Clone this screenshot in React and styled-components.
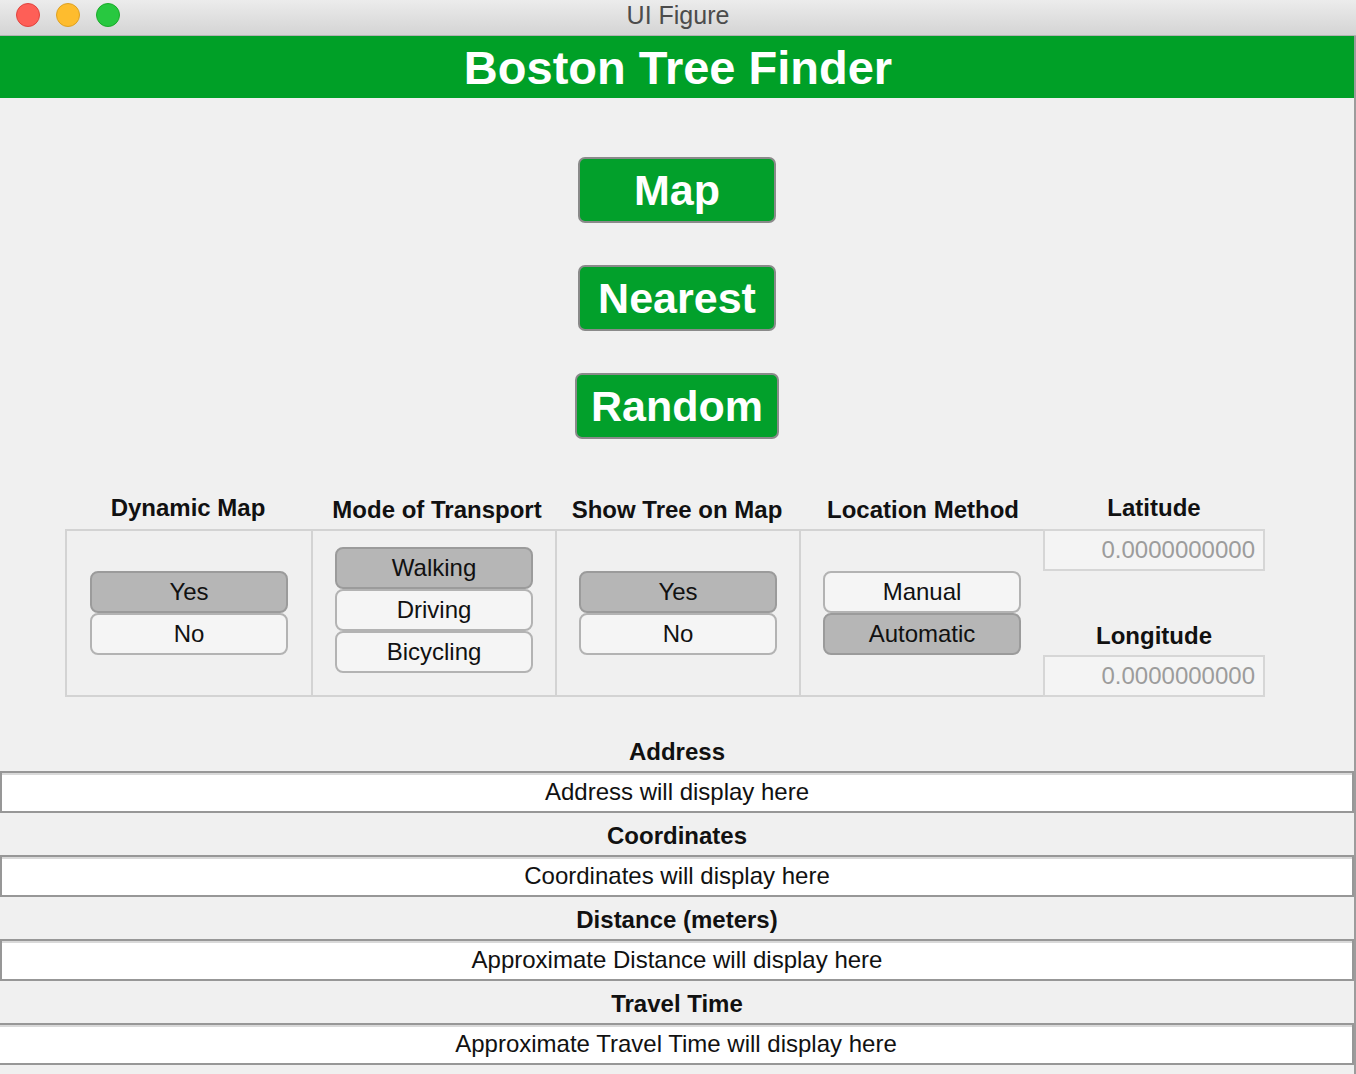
import React from 'react'
import styled, { createGlobalStyle } from 'styled-components'

const GlobalStyle = createGlobalStyle`
  html, body {
    margin: 0;
    padding: 0;
    background: #f0f0f0;
  }
  body {
    font-family: "Liberation Sans", Arial, Helvetica, sans-serif;
  }
`

const Window = styled.div`
  width: 1356px;
  height: 1074px;
  display: flex;
  flex-direction: column;
  overflow: hidden;
  background: #f0f0f0;
`

const TitleBar = styled.div`
  height: 35px;
  flex: none;
  display: flex;
  align-items: center;
  position: relative;
  background: linear-gradient(#ececec, #d4d4d4);
  border-bottom: 1px solid #b2b2b2;
`

const Lights = styled.div`
  display: flex;
  gap: 16px;
  padding-left: 16px;
  padding-bottom: 5px;
`

const Light = styled.span`
  width: 22px;
  height: 22px;
  border-radius: 50%;
  background: ${p => p.fill};
  border: 1px solid ${p => p.edge};
`

const WindowTitle = styled.div`
  position: absolute;
  left: 0;
  right: 0;
  top: 0;
  text-align: center;
  font-size: 25px;
  line-height: 30px;
  color: #4c4c4c;
  pointer-events: none;
`

const Body = styled.div`
  flex: 1;
  display: flex;
  flex-direction: column;
  border-right: 2px solid #9c9c9c;
`

const Header = styled.div`
  height: 62px;
  flex: none;
  background: #00a027;
  color: #fff;
  font-weight: 700;
  font-size: 47px;
  display: flex;
  align-items: center;
  justify-content: center;
  padding-left: 2px;
`

const Actions = styled.div`
  display: flex;
  flex-direction: column;
  align-items: center;
  gap: 42px;
  padding-top: 59px;
`

const ActionButton = styled.button`
  width: ${p => p.w}px;
  height: 66px;
  box-sizing: border-box;
  background: #02a02b;
  color: #fff;
  font-family: inherit;
  font-weight: 700;
  font-size: 43px;
  border: 2px solid #8a8a8a;
  border-radius: 7px;
  padding: 0;
  cursor: pointer;
`

const Controls = styled.div`
  display: flex;
  margin: 54px 0 0 65px;
`

const Column = styled.div`
  width: ${p => p.w}px;
  display: flex;
  flex-direction: column;
`

const Heading = styled.div`
  height: 36px;
  box-sizing: border-box;
  display: flex;
  align-items: center;
  justify-content: center;
  font-weight: 700;
  font-size: 24px;
  color: #111;
  white-space: nowrap;
  padding-bottom: ${p => p.low ? 2 : 6}px;
  padding-left: ${p => p.nudge || 0}px;
`

const Cell = styled.div`
  height: 168px;
  box-sizing: border-box;
  border: 2px solid #d3d3d3;
  border-right: none;
  display: flex;
  align-items: center;
  justify-content: center;
`

const Toggle = styled.div`
  width: 198px;
  display: flex;
  flex-direction: column;
  margin-top: ${p => p.shift || 0}px;
`

const ToggleButton = styled.div`
  height: 42px;
  box-sizing: border-box;
  border: 2px solid ${p => p.on ? '#9b9b9b' : '#b3b3b3'};
  border-radius: 8px;
  background: ${p => p.on ? '#b6b6b6' : '#f5f5f5'};
  display: flex;
  align-items: center;
  justify-content: center;
  font-size: 24px;
  color: #111;
`

const CoordColumn = styled.div`
  width: 222px;
  display: flex;
  flex-direction: column;
`

const CoordField = styled.div`
  height: 42px;
  box-sizing: border-box;
  border: 2px solid #d6d6d6;
  background: #f4f4f4;
  display: flex;
  align-items: center;
  justify-content: flex-end;
  padding-right: 8px;
  font-size: 24px;
  color: #9c9c9c;
`

const CoordGap = styled.div`
  height: 84px;
  display: flex;
  align-items: flex-end;
  justify-content: center;
  padding-bottom: 5px;
  box-sizing: border-box;
  font-weight: 700;
  font-size: 24px;
  color: #111;
`

const Outputs = styled.div`
  display: flex;
  flex-direction: column;
  margin-top: 32px;
`

const OutLabel = styled.div`
  height: 42px;
  box-sizing: border-box;
  padding-top: 4px;
  display: flex;
  align-items: center;
  justify-content: center;
  font-weight: 700;
  font-size: 24px;
  color: #111;
`

const OutField = styled.div`
  height: 42px;
  box-sizing: border-box;
  background: #fff;
  border: 2px solid #979797;
  border-left: ${p => p.open ? 'none' : '2px solid #979797'};
  box-shadow: inset 0 2px 0 #d9d9d9;
  display: flex;
  align-items: center;
  justify-content: center;
  font-size: 24px;
  color: #111;
`

const groups = [
  { title: 'Dynamic Map', w: 246, items: ['Yes', 'No'], on: 0 },
  { title: 'Mode of Transport', w: 244, items: ['Walking', 'Driving', 'Bicycling'], on: 0, shift: -6, low: true, nudge: 8 },
  { title: 'Show Tree on Map', w: 244, items: ['Yes', 'No'], on: 0, low: true },
  { title: 'Location Method', w: 244, items: ['Manual', 'Automatic'], on: 1, low: true, nudge: 4 },
]

const outputs = [
  ['Address', 'Address will display here'],
  ['Coordinates', 'Coordinates will display here'],
  ['Distance (meters)', 'Approximate Distance will display here'],
  ['Travel Time', 'Approximate Travel Time will display here'],
]

const App = () => {
  return (
    <Window>
      <GlobalStyle />
      <TitleBar>
        <Lights>
          <Light fill="#fe5f57" edge="#e0443e" />
          <Light fill="#febc2e" edge="#dea123" />
          <Light fill="#28c840" edge="#1aab29" />
        </Lights>
        <WindowTitle>UI Figure</WindowTitle>
      </TitleBar>
      <Body>
        <Header>Boston Tree Finder</Header>
        <Actions>
          <ActionButton w={198}>Map</ActionButton>
          <ActionButton w={198}>Nearest</ActionButton>
          <ActionButton w={204}>Random</ActionButton>
        </Actions>
        <Controls>
          {groups.map(g => (
            <Column key={g.title} w={g.w}>
              <Heading low={g.low} nudge={g.nudge}>{g.title}</Heading>
              <Cell>
                <Toggle shift={g.shift}>
                  {g.items.map((it, j) => (
                    <ToggleButton key={it} on={j === g.on}>{it}</ToggleButton>
                  ))}
                </Toggle>
              </Cell>
            </Column>
          ))}
          <CoordColumn>
            <Heading>Latitude</Heading>
            <CoordField>0.0000000000</CoordField>
            <CoordGap>Longitude</CoordGap>
            <CoordField>0.0000000000</CoordField>
          </CoordColumn>
        </Controls>
        <Outputs>
          {outputs.map(([label, text], i) => (
            <React.Fragment key={label}>
              <OutLabel>{label}</OutLabel>
              <OutField open={i === outputs.length - 1}>{text}</OutField>
            </React.Fragment>
          ))}
        </Outputs>
      </Body>
    </Window>
  )
}

export default App
